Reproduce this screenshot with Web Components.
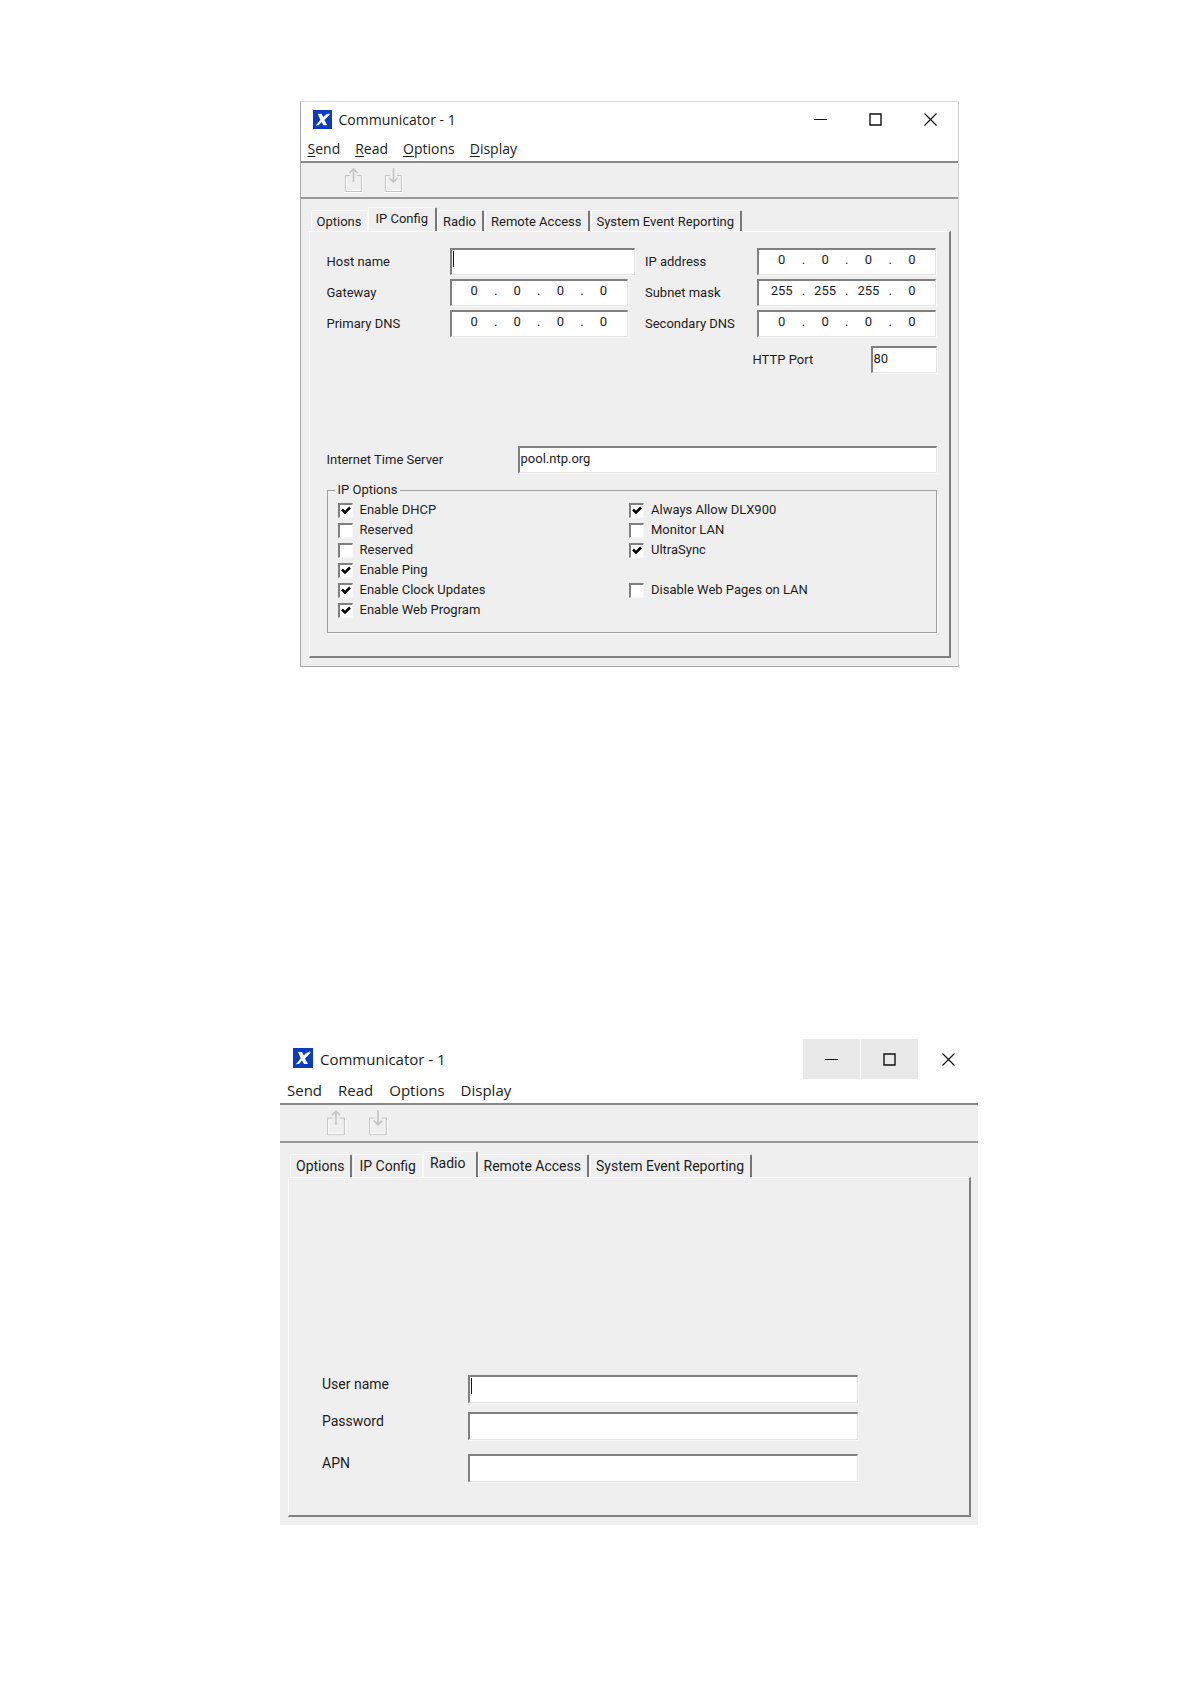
<!DOCTYPE html>
<html lang="en">
<head>
<meta charset="utf-8">
<title>Communicator</title>
<style>
    * {
        box-sizing: border-box;
    }

    body {
        margin: 0;
        background: #fff;
        color: #1c1c1c;
        font-family: Roboto, "Liberation Sans", Arial, sans-serif;
    }

    main {
        display: flex;
        flex-direction: column;
        align-items: center;
        gap: 372px;
        padding: 101px 0 160px 67px;
    }

    /* windows */
    app-window {
        width: 100%;
        --face: #efefef;
        --dark: #808080;
    }

    .ip-window {
        max-width: 659px;
        --ui-size: 13px;
        --menu-size: 14px;
        --menu-height: 23px;
        --menu-gap: 15px;
        --tool-height: 38px;
        --tool-size: 20px;
        --tool-inset: 43px;
        --tab-height: 24px;
        --tab-end: 7px;
        --field-height: 27px;
    }

    .radio-window {
        max-width: 698px;
        --ui-size: 14px;
        --menu-size: 15px;
        --menu-height: 24px;
        --menu-gap: 16px;
        --tool-height: 40px;
        --tool-size: 21px;
        --tool-inset: 46px;
        --tab-height: 26px;
        --tab-end: 10px;
        --field-height: 28px;
    }

    /* IP Config tab */
    .addresses {
        display: grid;
        grid-template-columns: 309fr 292fr;
        gap: 4px 10px;
    }

    .addresses .left {
        --label-width: 123px;
    }

    .addresses ip-field.left {
        margin-right: 7px;
    }

    .addresses .right {
        --label-width: 112px;
    }

    .port {
        width: 184px;
        margin: 9px 0 0 auto;
        --label-width: 118px;
    }

    .server {
        margin: 73px 0 8px;
        --label-width: 191px;
    }

    /* Radio tab */
    .login {
        display: flex;
        flex-direction: column;
        gap: 9px;
        padding: 181px 99px 10px 16px;
        --label-width: 146px;
        --label-align: start;
    }

    .login .apn {
        margin-top: 5px;
    }
</style>
</head>
<body>
<main>
    <app-window class="ip-window" heading="Communicator - 1" framed>
        <menu-bar slot="menu" items="Send,Read,Options,Display" keys></menu-bar>
        <tool-bar slot="tools"></tool-bar>
        <tab-strip items="Options,IP Config,Radio,Remote Access,System Event Reporting" active="1">
            <div class="addresses">
                <text-field class="left" label="Host name" caret></text-field>
                <ip-field class="right" label="IP address" value="0.0.0.0"></ip-field>
                <ip-field class="left" label="Gateway" value="0.0.0.0"></ip-field>
                <ip-field class="right" label="Subnet mask" value="255.255.255.0"></ip-field>
                <ip-field class="left" label="Primary DNS" value="0.0.0.0"></ip-field>
                <ip-field class="right" label="Secondary DNS" value="0.0.0.0"></ip-field>
            </div>
            <text-field class="port" label="HTTP Port" value="80"></text-field>
            <text-field class="server" label="Internet Time Server" value="pool.ntp.org"></text-field>
            <group-box label="IP Options">
                <check-box label="Enable DHCP" checked></check-box>
                <check-box label="Always Allow DLX900" checked></check-box>
                <check-box label="Reserved"></check-box>
                <check-box label="Monitor LAN"></check-box>
                <check-box label="Reserved"></check-box>
                <check-box label="UltraSync" checked></check-box>
                <check-box label="Enable Ping" checked></check-box>
                <span></span>
                <check-box label="Enable Clock Updates" checked></check-box>
                <check-box label="Disable Web Pages on LAN"></check-box>
                <check-box label="Enable Web Program" checked></check-box>
            </group-box>
        </tab-strip>
    </app-window>

    <app-window class="radio-window" heading="Communicator - 1" hot>
        <menu-bar slot="menu" items="Send,Read,Options,Display"></menu-bar>
        <tool-bar slot="tools"></tool-bar>
        <tab-strip items="Options,IP Config,Radio,Remote Access,System Event Reporting" active="2">
            <div class="login">
                <text-field label="User name" caret></text-field>
                <text-field label="Password" type="password"></text-field>
                <text-field class="apn" label="APN"></text-field>
            </div>
        </tab-strip>
    </app-window>
</main>

<script>
    // shared by every element
    const baseCss = `
        * {
            box-sizing: border-box;
        }

        button, input {
            margin: 0;
            border: 0;
            padding: 0;
            background: none;
            color: inherit;
            font: inherit;
            outline: 0;
        }
    `;

    // sunken edit box, used by text-field and ip-field
    const fieldCss = `
        :host {
            display: grid;
            grid-template-columns: var(--label-width) 1fr;
            align-items: var(--label-align, center);
            font-size: var(--ui-size);
            line-height: 18px;
        }

        .box {
            width: 100%;
            min-width: 0;
            height: var(--field-height);
            border: 1px solid #e3e3e3;
            border-top: 2px solid var(--dark);
            border-left: 2px solid var(--dark);
            background-color: #fff;
            box-shadow: 1px 1px 0 #f8f8f8;
        }
    `;

    class BaseElement extends HTMLElement {
        connectedCallback() {
            if (this.shadowRoot) return;
            const template = document.createElement("template");
            template.innerHTML = `<style>${baseCss}${this.css()}</style>${this.html()}`;
            this.attachShadow({ mode: "open" });
            this.shadowRoot.appendChild(template.content.cloneNode(true));
        }

        list(name) {
            return this.getAttribute(name).split(",");
        }
    }

    class AppWindow extends BaseElement {
        css() {
            return `
                :host {
                    display: block;
                    box-sizing: border-box;
                    background: var(--face);
                }

                :host([framed]) {
                    border: 1px solid #a8a8a8;
                    border-top-color: #dcdcdc;
                    border-right-color: #cfcfcf;
                }

                .title {
                    display: flex;
                    align-items: flex-start;
                    height: 36px;
                    padding-left: 12px;
                    background: #fff;
                    font-family: "Open Sans", "Noto Sans", sans-serif;
                    font-size: var(--menu-size);
                }

                :host([hot]) .title {
                    height: 40px;
                    padding-left: 13px;
                }

                .logo {
                    width: 19px;
                    height: 19px;
                    margin: 8px 7px 0 0;
                }

                :host([hot]) .logo {
                    width: 20px;
                    height: 20px;
                    margin-top: 9px;
                }

                h1 {
                    flex: 1;
                    margin: 0;
                    font: inherit;
                    line-height: 36px;
                }

                :host([hot]) h1 {
                    line-height: 40px;
                }

                button {
                    display: grid;
                    place-items: center;
                    width: 55px;
                    height: 35px;
                }

                :host([hot]) button {
                    width: 58px;
                    height: 40px;
                    border-right: 1px solid #fff;
                    background: #e9e9e9;
                }

                :host([hot]) .close {
                    width: 59px;
                    background: none;
                }

                button svg {
                    width: 13px;
                    height: 13px;
                    fill: none;
                    stroke: #111;
                }
            `;
        }

        html() {
            return `
                <header class="title">
                    <svg class="logo" viewBox="0 0 20 20">
                        <path fill="#0b3cc0" d="M0 0h20v20H0z"/>
                        <path fill="#b9cdf8" d="M18 3l-8 7-3 4-4 3 4-6 6-6z"/>
                        <path fill="#fff" d="M5 4h4l2 4 4-3.500h3l-6 6 3 5.500h-4l-2-3.500L6 16H3l5-5z"/>
                    </svg>
                    <h1>${this.getAttribute("heading")}</h1>
                    <button aria-label="Minimize"><svg viewBox="0 0 13 13"><path d="M0 6.500h13"/></svg></button>
                    <button aria-label="Maximize"><svg viewBox="0 0 13 13"><path d="M1 1h11v11H1z" stroke-width="1.400"/></svg></button>
                    <button class="close" aria-label="Close"><svg viewBox="0 0 13 13"><path d="M.5.5l12 12M12.500.5l-12 12" stroke-width="1.200"/></svg></button>
                </header>
                <slot name="menu"></slot>
                <slot name="tools"></slot>
                <slot></slot>
            `;
        }
    }

    class MenuBar extends BaseElement {
        css() {
            return `
                :host {
                    display: block;
                    background: #fff;
                    font-family: "Open Sans", "Noto Sans", sans-serif;
                    font-size: var(--menu-size);
                }

                nav {
                    display: flex;
                    align-items: flex-start;
                    gap: var(--menu-gap);
                    height: var(--menu-height);
                    padding-left: 7px;
                }

                button {
                    line-height: 22px;
                }

                u {
                    text-underline-offset: 2px;
                }
            `;
        }

        html() {
            const keys = this.hasAttribute("keys");
            const items = this.list("items").map((name) => {
                const text = keys ? `<u>${name[0]}</u>${name.slice(1)}` : name;
                return `<button>${text}</button>`;
            });
            return `<nav>${items.join("")}</nav>`;
        }
    }

    class ToolBar extends BaseElement {
        css() {
            return `
                :host {
                    display: flex;
                    align-items: flex-start;
                    gap: var(--tool-size);
                    box-sizing: border-box;
                    height: var(--tool-height);
                    padding: 4px 0 0 var(--tool-inset);
                    border-top: 2px solid #888;
                    border-bottom: 2px solid #999;
                }

                button {
                    width: var(--tool-size);
                }

                svg {
                    display: block;
                    width: 100%;
                    fill: none;
                    stroke: #c4c4c4;
                }

                .shine {
                    stroke: #fff;
                }
            `;
        }

        html() {
            const tray = "M6 8.500H1.500v16h16v-16H13";
            const icon = (arrow) => `
                <svg viewBox="0 0 20 26">
                    <path class="shine" d="M2.500 10v13.500h14M0 25.500h18.500V8"/>
                    <path d="${tray}"/>
                    <path d="${arrow}" stroke-width="1.600"/>
                </svg>`;
            return `
                <button aria-label="Send">${icon("M9.500 15V2M5.500 6l4-4 4 4")}</button>
                <button aria-label="Read">${icon("M9.500 1v14M5.500 11l4 4 4-4")}</button>
            `;
        }
    }

    class TabStrip extends BaseElement {
        css() {
            return `
                :host {
                    display: block;
                    padding: 8px 7px 8px 8px;
                    font-size: var(--ui-size);
                }

                nav {
                    display: flex;
                    align-items: flex-end;
                    height: var(--tab-height);
                    padding-left: 2px;
                }

                button {
                    height: calc(var(--tab-height) - 3px);
                    padding: 0 6px 0 5px;
                    border: 1px solid #fafafa;
                    border-right: 2px solid #777;
                    border-bottom: 0;
                    border-radius: 2px 2px 0 0;
                    line-height: 19px;
                    white-space: nowrap;
                }

                button + button {
                    margin-left: 1px;
                }

                .active {
                    height: var(--tab-height);
                    padding: 0 var(--tab-end) 3px 6px;
                }

                button + .active,
                .active + button {
                    margin-left: 0;
                }

                .before {
                    border-right: 1px solid #fafafa;
                }

                .panel {
                    padding: 16px 12px 23px 17px;
                    border: 1px solid #fff;
                    border-right: 2px solid var(--dark);
                    border-bottom: 2px solid var(--dark);
                }
            `;
        }

        html() {
            const active = Number(this.getAttribute("active"));
            const tabs = this.list("items").map((name, i) => {
                const cls = i === active ? "active" : i === active - 1 ? "before" : "";
                return `<button role="tab" aria-selected="${i === active}" class="${cls}">${name}</button>`;
            });
            return `
                <nav role="tablist">${tabs.join("")}</nav>
                <div class="panel"><slot></slot></div>
            `;
        }
    }

    class TextField extends BaseElement {
        css() {
            return fieldCss + `
                input {
                    padding: 0 0 4px 1px;
                }

                /* text cursor at rest */
                :host([caret]) input {
                    background-image: linear-gradient(#111, #111);
                    background-repeat: no-repeat;
                    background-position: 1px 1px;
                    background-size: 1px 16px;
                }
            `;
        }

        html() {
            const type = this.getAttribute("type") || "text";
            const value = this.getAttribute("value") || "";
            return `
                <label for="field">${this.getAttribute("label")}</label>
                <input class="box" id="field" type="${type}" value="${value}">
            `;
        }
    }

    class IpField extends BaseElement {
        css() {
            return fieldCss + `
                .box {
                    display: flex;
                    padding: 0 7px 5px 6px;
                    align-items: center;
                }

                input {
                    flex: 1;
                    width: 0;
                    text-align: center;
                }

                .box span {
                    width: 10px;
                    text-align: center;
                }
            `;
        }

        html() {
            const label = this.getAttribute("label");
            const octets = this.getAttribute("value").split(".").map((octet, i) => {
                const id = i === 0 ? `id="field"` : `aria-label="${label} ${i + 1}"`;
                return `<input ${id} value="${octet}">`;
            });
            return `
                <label for="field">${label}</label>
                <div class="box">${octets.join("<span>.</span>")}</div>
            `;
        }
    }

    class GroupBox extends BaseElement {
        css() {
            return `
                :host {
                    display: block;
                    font-size: var(--ui-size);
                }

                fieldset {
                    margin: 0;
                    padding: 1px 15px 12px 10px;
                    border: 1px solid #a0a0a0;
                    box-shadow: 1px 1px 0 #fafafa;
                }

                legend {
                    margin-left: -3px;
                    padding: 0 3px;
                    line-height: 18px;
                }

                .grid {
                    display: grid;
                    grid-template-columns: 1fr 1fr;
                    grid-auto-rows: 20px;
                }
            `;
        }

        html() {
            return `
                <fieldset>
                    <legend>${this.getAttribute("label")}</legend>
                    <div class="grid"><slot></slot></div>
                </fieldset>
            `;
        }
    }

    class CheckBox extends BaseElement {
        css() {
            return `
                :host {
                    display: block;
                }

                label {
                    display: flex;
                    align-items: center;
                    gap: 7px;
                    line-height: 20px;
                }

                .tick {
                    display: grid;
                }

                .tick > * {
                    grid-area: 1 / 1;
                }

                input {
                    appearance: none;
                    width: 15px;
                    height: 15px;
                    border: 1px solid #f8f8f8;
                    border-top: 2px solid var(--dark);
                    border-left: 2px solid var(--dark);
                    background: #fff;
                }

                svg {
                    width: 15px;
                    height: 15px;
                    fill: none;
                    stroke: #000;
                    stroke-width: 2.500;
                    pointer-events: none;
                }

                input:not(:checked) + svg {
                    visibility: hidden;
                }
            `;
        }

        html() {
            const checked = this.hasAttribute("checked") ? "checked" : "";
            return `
                <label>
                    <span class="tick">
                        <input type="checkbox" ${checked}>
                        <svg viewBox="0 0 15 15"><path d="M4 6.500l3 3 5-5"/></svg>
                    </span>
                    ${this.getAttribute("label")}
                </label>
            `;
        }
    }

    customElements.define("app-window", AppWindow);
    customElements.define("menu-bar", MenuBar);
    customElements.define("tool-bar", ToolBar);
    customElements.define("tab-strip", TabStrip);
    customElements.define("text-field", TextField);
    customElements.define("ip-field", IpField);
    customElements.define("group-box", GroupBox);
    customElements.define("check-box", CheckBox);
</script>
</body>
</html>
